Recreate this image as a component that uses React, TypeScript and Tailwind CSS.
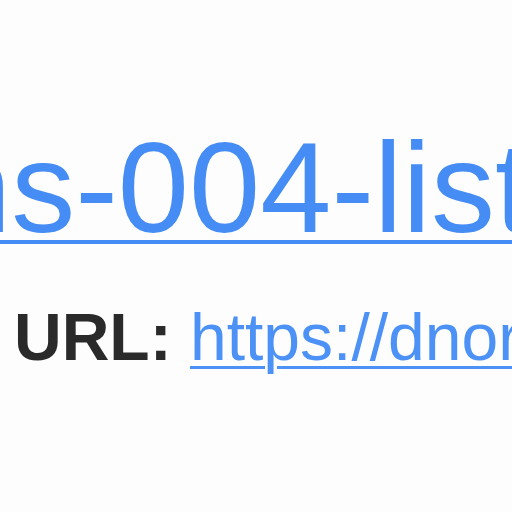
export default function App() {
  return (
    <div className="w-[512px] h-[512px] overflow-hidden bg-[#fdfdfd] font-['Liberation_Sans',Arial,sans-serif] blur-[0.6px]">
      <div className="pt-[124px] flex flex-col">
        <a
          href="#"
          className="block whitespace-nowrap ml-[-60px] text-[128px] leading-none text-[#458cf5] underline decoration-[4px] underline-offset-[8px]"
        >
          ns-004-listing
        </a>
        <div className="mt-[52px] ml-[14px] whitespace-nowrap text-[66px] leading-none">
          <span className="font-bold text-[#2a2a2a]">URL:</span>{' '}
          <a href="#" className="text-[#4c91f6] underline decoration-[3px] underline-offset-[6px]">
            https://dnorman.github.io
          </a>
        </div>
        <p className="mt-[139px] ml-[-5px] whitespace-nowrap text-[66px] leading-none text-[#2a2a2a]">
          custom view for the list
        </p>
      </div>
    </div>
  );
}
